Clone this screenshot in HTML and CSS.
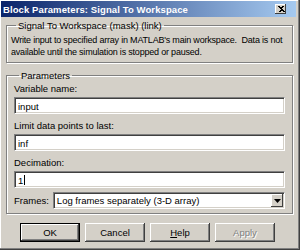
FILE: index.html
```html
<!DOCTYPE html>
<html lang="en">
<head>
  <meta charset="UTF-8" />
  <title>Block Parameters: Signal To Workspace</title>
  <link rel="stylesheet" href="styles.css">
</head>
<body>

  <div class="window">
    <div class="titlebar">
      <span class="title">Block Parameters: Signal To Workspace</span>
      <span class="close">
        <svg width="8" height="7" viewBox="0 0 8 7">
          <path d="M1 0h2v1h2v-1h2v1h-1v1h-1v1h1v1h1v1h1v1h-2v-1h-2v1h-2v-1h1v-1h1v-1h-1v-1h-1v-1h-1z" fill="#000"/>
        </svg>
      </span>
    </div>

    <div class="content">
      <fieldset class="group">
        <legend>Signal To Workspace (mask) (link)</legend>
        <p class="desc">Write input to specified array in MATLAB's main workspace.&nbsp; Data is not<br>available until the simulation is stopped or paused.</p>
      </fieldset>

      <fieldset class="group params">
        <legend>Parameters</legend>
        <label class="field-label">Variable name:</label>
        <div class="textbox">input</div>
        <label class="field-label">Limit data points to last:</label>
        <div class="textbox">inf</div>
        <label class="field-label">Decimation:</label>
        <div class="textbox">1<span class="caret"></span></div>
        <div class="frames-row">
          <label>Frames:</label>
          <div class="select">
            <span class="select-text">Log frames separately (3-D array)</span>
            <span class="select-btn">
              <svg width="7" height="4" viewBox="0 0 7 4"><path d="M0 0h7l-3.5 4z" fill="#000"/></svg>
            </span>
          </div>
        </div>
      </fieldset>

      <div class="buttons">
        <button class="btn default">OK</button>
        <button class="btn">Cancel</button>
        <button class="btn"><u>H</u>elp</button>
        <button class="btn disabled">Apply</button>
      </div>
    </div>
  </div>

</body>
</html>
```

FILE: styles.css
```css
* {
  margin: 0;
  padding: 0;
  box-sizing: border-box;
  font-family: "Liberation Sans", Arial, sans-serif;
}
body {
  width: 300px;
  height: 250px;
  overflow: hidden;
  background: #d4d0c8;
  color: #000;
  font-size: 9px;
}
.window {
  width: 300px;
  height: 250px;
  background: #d4d0c8;
  border-right: 1px solid #404040;
  border-bottom: 1px solid #404040;
  box-shadow: inset -1px -1px #808080, inset 1px 1px #fff;
  padding: 1px 3px 0 1px;
}
.titlebar {
  height: 16px;
  background: linear-gradient(to right, #0a246a, #a6caf0);
  display: flex;
  align-items: center;
  justify-content: space-between;
  padding: 0 10px 0 2px;
}
.title {
  color: #fff;
  font-weight: bold;
  font-size: 9.5px;
  letter-spacing: 0.1px;
}
.close {
  width: 11px;
  height: 10px;
  background: #d4d0c8;
  display: flex;
  align-items: center;
  justify-content: center;
  box-shadow: inset -1px -1px #404040, inset 1px 1px #fff;
}
.content {
  padding: 2px 3px 0 5px;
}
.group {
  border: 1px solid #808080;
  box-shadow: inset 1px 1px #fff, 1px 1px #fff;
  padding: 2px 4px 4px 4px;
}
.group legend {
  padding: 0 2px;
  margin-left: 5px;
  line-height: 13px;
  font-size: 9.5px;
  color: #000;
}
.desc {
  line-height: 12px;
  white-space: nowrap;
  letter-spacing: -0.2px;
}
.params {
  margin-top: 6px;
  padding: 1px 7px 4px 7px;
}
.field-label {
  display: block;
  line-height: 12px;
  margin-top: 6px;
  font-size: 9.5px;
}
.field-label:first-of-type {
  margin-top: 0;
}
.textbox {
  height: 17px;
  margin-top: 2px;
  background: #fff;
  border-top: 1px solid #808080;
  border-left: 1px solid #808080;
  border-right: 1px solid #fff;
  border-bottom: 1px solid #fff;
  box-shadow: inset 1px 1px #404040, inset -1px -1px #d4d0c8;
  padding: 1px 3px 0;
  line-height: 13px;
  font-size: 9.5px;
  display: flex;
  align-items: center;
}
.caret {
  display: inline-block;
  width: 1px;
  height: 10px;
  background: #000;
  margin-left: 1px;
}
.frames-row {
  display: flex;
  align-items: center;
  gap: 4px;
  margin-top: 4px;
  font-size: 9.5px;
}
.select {
  flex: 1;
  height: 17px;
  background: #fff;
  border-top: 1px solid #808080;
  border-left: 1px solid #808080;
  border-right: 1px solid #fff;
  border-bottom: 1px solid #fff;
  box-shadow: inset 1px 1px #404040, inset -1px -1px #d4d0c8;
  display: flex;
  align-items: center;
  padding: 1px 1px 1px 3px;
}
.select-text {
  flex: 1;
}
.select-btn {
  width: 12px;
  height: 13px;
  background: #d4d0c8;
  box-shadow: inset -1px -1px #404040, inset 1px 1px #fff;
  display: flex;
  align-items: center;
  justify-content: center;
}
.buttons {
  display: flex;
  justify-content: center;
  gap: 5px;
  margin-top: 9px;
  margin-left: -4px;
}
.btn {
  width: 60px;
  height: 19px;
  background: #d4d0c8;
  border: none;
  font-size: 9.5px;
  color: #000;
  box-shadow: inset -1px -1px #404040, inset 1px 1px #fff, inset -2px -2px #808080;
}
.btn.default {
  border: 1px solid #000;
}
.btn.disabled {
  color: #808080;
  text-shadow: 1px 1px #fff;
}
```
